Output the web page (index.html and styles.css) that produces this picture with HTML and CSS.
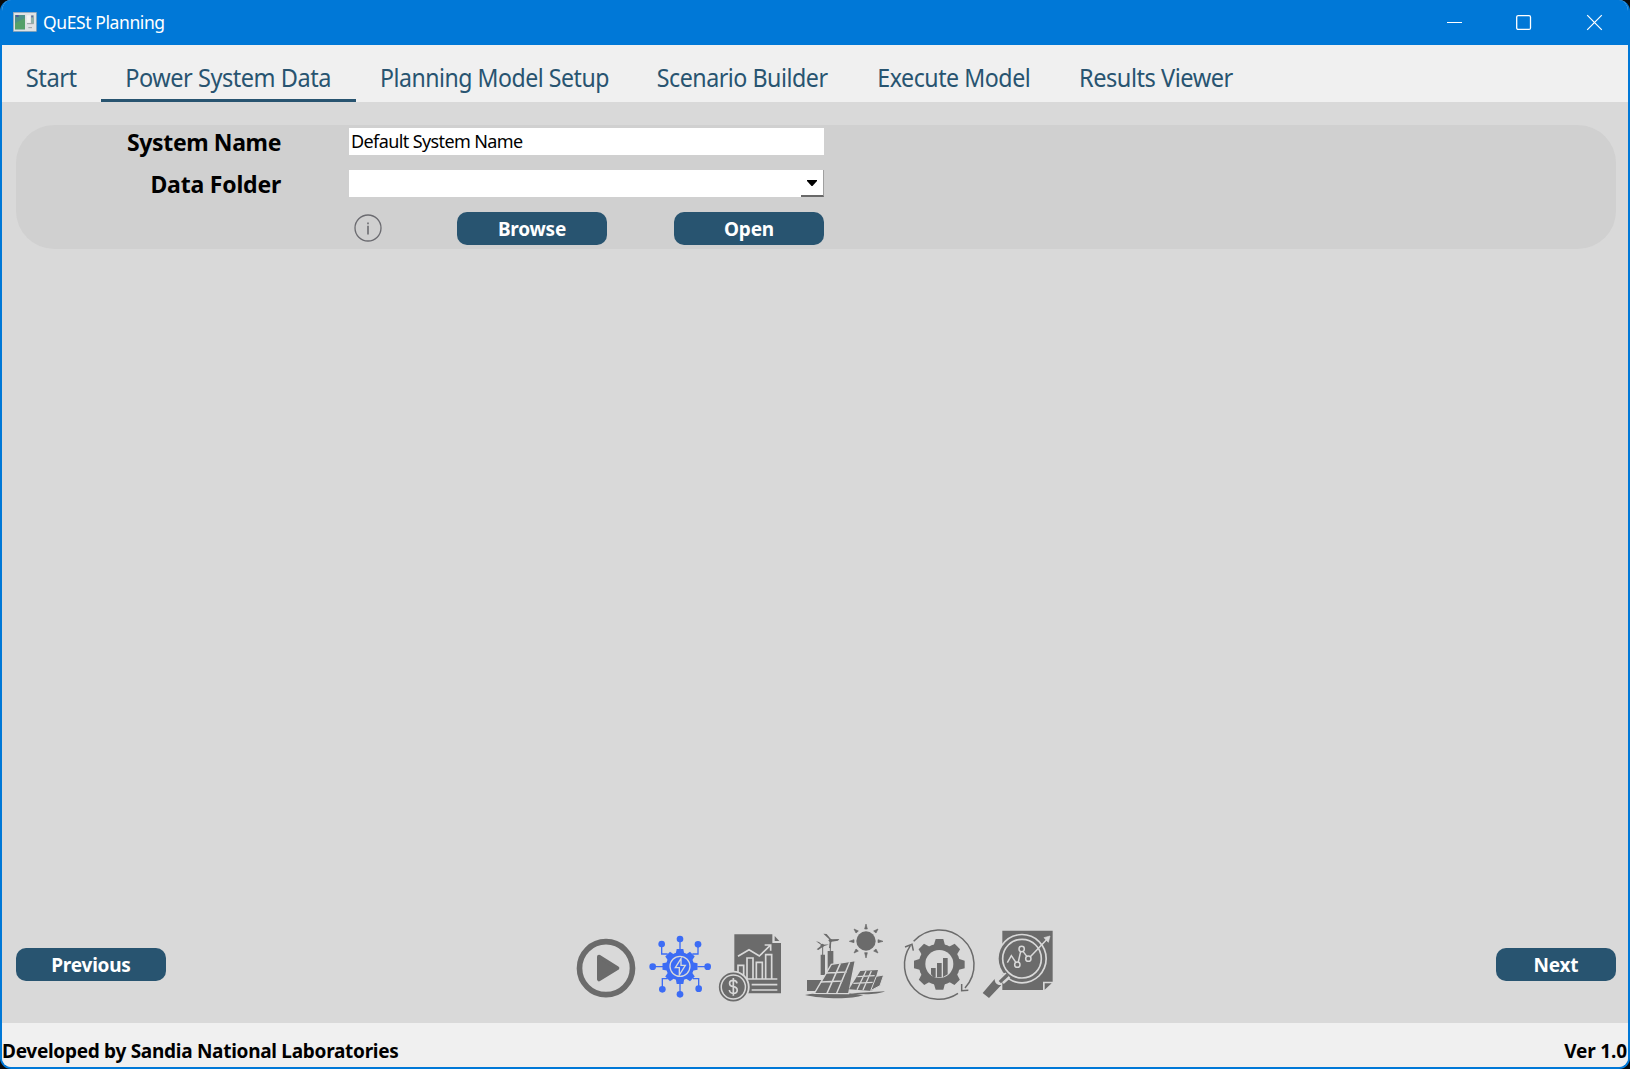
FILE: index.html
```html
<!DOCTYPE html>
<html lang="en">
<head>
<meta charset="utf-8">
<title>QuESt Planning</title>
<link rel="stylesheet" href="styles.css">
</head>
<body>
<div class="window">
  <header class="titlebar">
    <svg class="app-icon" width="24" height="20" viewBox="0 0 72 60">
      <rect x="1" y="1" width="69" height="57" fill="#dfe2e4" stroke="#9aa5ae" stroke-width="2"/>
      <rect x="6" y="9" width="30" height="43" fill="#4b8f88"/>
      <path d="M6 34L36 18V52H6Z" fill="#55a068"/>
      <rect x="9" y="10" width="8" height="4" fill="#4b3fa0"/>
      <rect x="41" y="10" width="11" height="22" fill="#f2f2f2"/>
      <rect x="54" y="10" width="9" height="25" fill="#8fb0a8"/>
      <rect x="55" y="11" width="5" height="5" fill="#5b62a8"/>
      <path d="M42 35H62M46 47H57" stroke="#9a9fa3" stroke-width="3"/>
    </svg>
    <span class="title">QuESt Planning</span>
    <div class="controls">
      <svg width="17" height="17" viewBox="0 0 17 17"><path d="M1 8.5H16" stroke="#fff"/></svg>
      <svg width="17" height="17" viewBox="0 0 17 17"><rect x="0.700" y="1.600" width="13.800" height="13.800" rx="1.500" fill="none" stroke="#fff" stroke-width="1.300"/></svg>
      <svg width="17" height="17" viewBox="0 0 17 17"><path d="M1.200 1.200L15.800 15.800M15.800 1.200L1.200 15.800" stroke="#fff" stroke-width="1.200"/></svg>
    </div>
  </header>

  <nav class="tabs">
    <a class="tab tab-start"><span>Start</span></a>
    <a class="tab tab-data active"><span>Power System Data</span></a>
    <a class="tab tab-setup"><span>Planning Model Setup</span></a>
    <a class="tab tab-scenario"><span>Scenario Builder</span></a>
    <a class="tab tab-execute"><span>Execute Model</span></a>
    <a class="tab tab-results"><span>Results Viewer</span></a>
  </nav>

  <main class="page">
    <section class="panel">
      <label class="label label-name">System Name</label>
      <div class="field">Default System Name</div>
      <label class="label label-folder">Data Folder</label>
      <div class="field combo">
        <div class="drop"><svg width="10" height="6" viewBox="0 0 10 6"><path d="M0 0H10V1L5.500 6H4.500L0 1Z"/></svg></div>
      </div>
      <div class="actions">
        <svg class="info" width="28" height="28" viewBox="0 0 28 28"><circle cx="14" cy="14" r="13" fill="none" stroke="#6b6b70" stroke-width="1.300"/><path d="M14 11.800V20.500M14 8.400V10.200" stroke="#77777b" stroke-width="1.800"/></svg>
        <button class="btn">Browse</button>
        <button class="btn">Open</button>
      </div>
    </section>

    <div class="bottom">
      <button class="btn">Previous</button>
      <div class="steps">
        <svg width="80" height="95" viewBox="0 0 240 285">
          <circle cx="123" cy="159.500" r="79.500" fill="none" stroke="#6b6b6b" stroke-width="17"/>
          <path d="M102 125L157 159.500L102 193Z" fill="#6b6b6b" stroke="#6b6b6b" stroke-width="12" stroke-linejoin="round"/>
        </svg>
        <svg width="70" height="95" viewBox="240 0 210 285">
          <g fill="none" stroke="#3c6cf5" stroke-width="4">
            <path d="M345 72V105M345 204V238M263 155H295M397 155H428M290 88V117H308M399 88V117H382M292 222V191H308M401 222V191H384"/>
          </g>
          <g fill="#3c6cf5">
            <circle cx="345" cy="72" r="10"/><circle cx="345" cy="238" r="10"/><circle cx="263" cy="155" r="10"/><circle cx="428" cy="155" r="10"/>
            <circle cx="290" cy="87" r="10"/><circle cx="399" cy="88" r="10"/><circle cx="292" cy="223" r="10"/><circle cx="401" cy="221" r="10"/>
            <circle cx="345" cy="154" r="42"/>
            <path d="M332 118L335 102H355L358 118V190L355 207H335L332 190Z"/>
            <path d="M332 118L335 102H355L358 118V190L355 207H335L332 190Z" transform="rotate(45 345 154.500)"/>
            <path d="M332 118L335 102H355L358 118V190L355 207H335L332 190Z" transform="rotate(90 345 154.500)"/>
            <path d="M332 118L335 102H355L358 118V190L355 207H335L332 190Z" transform="rotate(135 345 154.500)"/>
          </g>
          <circle cx="345" cy="154" r="30" fill="none" stroke="#d9d9d9" stroke-width="4"/>
          <path d="M348 131L331 158H343V180L361 151H348Z" fill="none" stroke="#d9d9d9" stroke-width="4"/>
        </svg>
        <svg width="90" height="95" viewBox="15 0 270 285">
          <path d="M73 58H187V84H213V235H73Z" fill="#6b6b6b"/><path d="M194 63L208 78H194Z" fill="#6b6b6b"/>
          <g fill="none" stroke="#d9d9d9" stroke-width="5">
            <path d="M84 124L117 104L148 123L180 92M164 90H182V107"/>
            <path d="M84 192V151H101V192M111 192V129H129V192M139 192V142H157V192M167 192V119H185V192M80 192H202M125 209H202M125 225H202"/>
          </g>
          <circle cx="70" cy="216" r="49" fill="#d9d9d9"/>
          <circle cx="70" cy="216" r="41" fill="none" stroke="#6b6b6b" stroke-width="5"/><circle cx="70" cy="216" r="34" fill="#6b6b6b"/>
          <path d="M81 205C80 198 76 196 70 196C55 196 55 213 70 215C86 217 85 235 70 235C63 235 59 232 58 225M70 189V242" fill="none" stroke="#d9d9d9" stroke-width="5"/>
        </svg>
        <svg width="85" height="95" viewBox="285 0 255 285">
          <g fill="#6b6b6b">
            <circle cx="468" cy="78" r="29"/>
            <path d="M464 42L468 27L472 42ZM464 113L468 129L472 113ZM432 74V83L418 79ZM504 74V83L519 79Z" stroke="#6b6b6b" stroke-width="2"/>
            <path d="M438 54L432 42L445 48ZM498 54L504 42L491 48ZM438 102L432 114L445 108ZM498 102L504 114L491 108Z" stroke="#6b6b6b" stroke-width="2"/>
            <path d="M332 119H345V180H332ZM353 108H370V180H353ZM291 195H340L320 228H291Z"/>
            <path d="M285 240C320 231 405 231 460 240C425 255 330 251 285 240Z"/><path d="M425 235L525 229C505 240 450 239 425 235Z"/>
          </g>
          <path d="M364 148L436 137L416 236L313 235Z" fill="#6b6b6b" stroke="#d9d9d9" stroke-width="4"/>
          <path d="M451 168L504 165L486 228L417 223Z" fill="#6b6b6b"/>
          <path d="M499 184L521 180L510 212L482 227Z" fill="#6b6b6b" stroke="#d9d9d9" stroke-width="3"/>
          <g fill="#6b6b6b">
            <path d="M360 75L340 56L350 57L363 73L388 72L384 77L364 80L362 100L357 99ZM335 91L318 79L327 81L337 89L359 88L341 94L325 105L320 103Z"/>
            <circle cx="361" cy="76" r="5"/><circle cx="337" cy="91" r="5"/>
          </g>
          <path d="M361 78V108M338 92V120" stroke="#6b6b6b" stroke-width="3"/>
          <path d="M348 174L410 171M332 201L398 198M391 145L351 235M419 142L380 235" fill="none" stroke="#d9d9d9" stroke-width="4.500"/>
          <path d="M442 185L494 182M430 205L488 202M468 168L441 224M484 168L459 225" fill="none" stroke="#d9d9d9" stroke-width="4"/>
        </svg>
        <svg width="90" height="95" viewBox="0 0 270 285">
          <g fill="none" stroke="#6b6b6b" stroke-width="4.500">
            <path d="M71 79A103 103 0 0 1 225 219M204 235A103 103 0 0 1 61 92M45 96L66 88L70 107M215 207V227L235 226"/>
          </g>
          <g fill="#6b6b6b"><circle cx="148" cy="148" r="62"/>
            <path d="M130 95L137 72H160L166 95V201L160 224H137L130 201Z"/>
            <path d="M130 95L137 72H160L166 95V201L160 224H137L130 201Z" transform="rotate(45 148 148)"/>
            <path d="M130 95L137 72H160L166 95V201L160 224H137L130 201Z" transform="rotate(90 148 148)"/>
            <path d="M130 95L137 72H160L166 95V201L160 224H137L130 201Z" transform="rotate(135 148 148)"/>
          </g>
          <circle cx="148" cy="147" r="42" fill="#d9d9d9"/>
          <path d="M123 159H137V186H130L123 178ZM141 144H155V187H141ZM159 129H173V178L159 186Z" fill="#6b6b6b"/>
        </svg>
        <svg width="90" height="95" viewBox="270 0 270 285">
          <path d="M337 47H488V200H459V225H337Z" fill="#6b6b6b"/><path d="M464 205H485L464 224Z" fill="#6b6b6b"/>
          <circle cx="396" cy="131" r="75" fill="#d9d9d9"/><circle cx="396" cy="131" r="70" fill="#6b6b6b"/>
          <circle cx="396" cy="131" r="58" fill="none" stroke="#d9d9d9" stroke-width="5"/>
          <path d="M352 143L364 122L380 146M385 141L392 109M399 109L411 125M421 125L471 73" fill="none" stroke="#d9d9d9" stroke-width="4.500"/>
          <path d="M462 68L480 63L475 82Z" fill="#d9d9d9" stroke="#d9d9d9" stroke-width="2"/>
          <g fill="#6b6b6b" stroke="#d9d9d9" stroke-width="4.500"><circle cx="382" cy="149" r="8"/><circle cx="395" cy="102" r="8"/><circle cx="415" cy="131" r="8"/></g>
          <path d="M316 198L348 180" stroke="#d9d9d9" stroke-width="14"/>
          <path d="M334 199L354 181" stroke="#d9d9d9" stroke-width="22"/>
          <path d="M326 198L350 175L357 182L333 205Z" fill="#6b6b6b"/>
          <path d="M314 192C314 203 321 212 334 210L297 249L278 234Z" fill="#6b6b6b"/>
        </svg>
      </div>
      <button class="btn btn-next">Next</button>
    </div>
  </main>

  <footer class="status">
    <span class="credit">Developed by Sandia National Laboratories</span>
    <span class="version">Ver 1.0</span>
  </footer>
</div>
</body>
</html>
```
FILE: styles.css
```css
* { box-sizing: border-box; }
body {
  margin: 0;
  background: #0a0a0a;
  font-family: "Noto Sans", "Open Sans", sans-serif;
  color: #000;
}
.window {
  width: 1630px;
  height: 1069px;
  display: flex;
  flex-direction: column;
  border: 2px solid #0078d7;
  border-top: 0;
  border-radius: 11px;
  overflow: hidden;
  background: #d9d9d9;
}
.titlebar {
  height: 45px;
  flex: none;
  display: flex;
  align-items: center;
  background: #0078d7;
  padding-left: 11px;
}
.app-icon { margin-top: -2px; }
.title {
  margin: -2px 0 0 6px;
  color: #fff;
  font-size: 17.500px;
  line-height: 24px;
  letter-spacing: -0.400px;
  white-space: nowrap;
}
.controls {
  margin-left: auto;
  display: flex;
  gap: 53px;
  padding-right: 25px;
}
.controls svg { display: block; }

.tabs {
  height: 57px;
  flex: none;
  display: flex;
  background: #f0f0f0;
  color: #285470;
  font-size: 24.500px;
}
.tab {
  padding: 9px 0 0;
  line-height: 48px;
  white-space: nowrap;
  display: flex;
  justify-content: center;
  letter-spacing: -0.500px;
}
.tab span { transform: scaleX(var(--narrow)); }
.active { border-bottom: 3px solid #285470; }
.tab-start { width: 99px; --narrow: 0.970; }
.tab-data { width: 255px; --narrow: 0.961; }
.tab-setup { width: 277px; --narrow: 0.942; }
.tab-scenario { width: 219px; --narrow: 0.948; }
.tab-execute { width: 203px; --narrow: 0.946; }
.tab-results { width: 202px; --narrow: 0.963; }

.page {
  flex: 1;
  display: flex;
  flex-direction: column;
  padding: 23px 12px 13px 14px;
}
.panel {
  height: 124px;
  display: grid;
  grid-template-columns: 265px 475px;
  grid-template-rows: 27px 27px 33px;
  column-gap: 68px;
  row-gap: 15px;
  padding-top: 3px;
  border-radius: 38px;
  background: #d0d0d0;
}
.label {
  text-align: right;
  font-size: 23px;
  font-weight: 700;
  line-height: 29px;
  white-space: nowrap;
}
.label-name { letter-spacing: -0.380px; }
.label-folder { letter-spacing: -0.200px; }
.field {
  background: #fff;
  padding-left: 2px;
  font-size: 18px;
  line-height: 27px;
  letter-spacing: -0.610px;
}
.combo { display: flex; justify-content: flex-end; }
.drop {
  width: 23px;
  display: flex;
  align-items: center;
  justify-content: center;
  border-right: 1px solid #a0a0a0;
  border-bottom: 2px solid #696969;
}
.drop svg { display: block; }
.actions {
  grid-column: 2;
  display: flex;
  align-items: flex-start;
  padding-left: 5px;
}
.info { margin: 2px 75px 0 0; }
.actions .btn + .btn { margin-left: 67px; }
.btn {
  width: 150px;
  height: 32.500px;
  padding: 1px 0 0;
  border: 0;
  border-radius: 10px;
  background: #285470;
  color: #fff;
  font: 700 19px/32px "Noto Sans", "Open Sans", sans-serif;
  letter-spacing: -0.220px;
}
.bottom {
  margin-top: auto;
  display: flex;
  align-items: center;
  height: 95px;
}
.bottom .btn {
  height: 33px;
  margin-top: 4px;
  padding-top: 1px;
}
.bottom .btn-next { width: 120px; }
.steps {
  display: flex;
  margin-left: 399px;
  margin-right: auto;
}
.steps svg { display: block; flex: none; }

.status {
  height: 44px;
  flex: none;
  display: flex;
  justify-content: space-between;
  padding: 15px 1px 0 0;
  background: #f0f0f0;
  font-size: 19px;
  font-weight: 700;
  line-height: 26px;
  letter-spacing: -0.280px;
  white-space: nowrap;
}
.version { letter-spacing: -0.150px; }
```
